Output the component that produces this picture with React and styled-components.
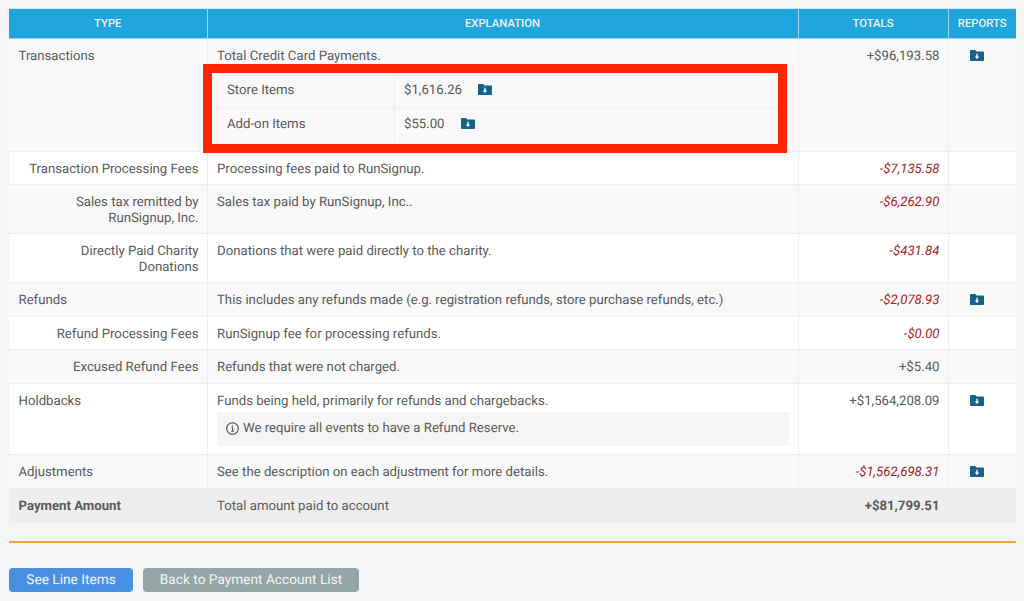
import React from "react";
import styled, { createGlobalStyle } from "styled-components";

const Global = createGlobalStyle`
  html, body { margin: 0; padding: 0; background: #f3f5f7; }
  body { font-family: Roboto, "Liberation Sans", sans-serif; font-size: 13.2px; color: #5a5a5a; text-rendering: geometricPrecision; }
`;

const Page = styled.div`
  position: relative;
  width: 1024px;
  height: 601px;
  overflow: hidden;
  box-sizing: border-box;
  padding: 8px 8px 0 9px;
`;

const Table = styled.table`
  width: 1007px;
  table-layout: fixed;
  border-collapse: collapse;
  line-height: 16px;
`;

const Head = styled.th`
  height: 30px;
  padding: 0;
  box-sizing: border-box;
  background: #20a5dd;
  color: #eaf6fc;
  font-size: 11.3px;
  font-weight: 500;
  text-transform: uppercase;
  text-align: center;
  border: 1px solid #9fd6ee;
  border-top: 1px solid #cfe7f3;
  &:first-child { border-left: none; }
  &:last-child { border-right: none; }
`;

const Row = styled.tr`
  background: ${(p) => (p.$total ? "#eeeeee" : p.$odd ? "#f9f9f9" : "#ffffff")};
  height: ${(p) => p.$h}px;
  font-weight: ${(p) => (p.$total ? 700 : 400)};
`;

const Cell = styled.td`
  box-sizing: border-box;
  padding: 10px ${(p) => (p.$report ? "18px" : "8px")} 0 ${(p) => (p.$report ? "8px" : "9.5px")};
  vertical-align: top;
  border: 1px solid #eeeeee;
  text-align: ${(p) => p.$align || "left"};
  color: ${(p) => (p.$neg ? "#a81d1d" : "#5a5a5a")};
  font-style: ${(p) => (p.$neg ? "italic" : "normal")};
  font-weight: ${(p) => (p.$plain ? 400 : "inherit")};
  &:first-child { border-left: none; }
  &:last-child { border-right: none; }
`;

const InnerTable = styled.table`
  width: 562px;
  margin: 9px 0 0 0;
  table-layout: fixed;
  border-collapse: collapse;
  border-left: 1px solid #eeeeee;
  line-height: 16px;
`;

const InnerRow = styled.tr`
  height: 34px;
`;

const InnerCell = styled.td`
  box-sizing: border-box;
  padding: 0 9px;
  border-bottom: ${(p) => (p.$last ? "none" : "1px solid #eeeeee")};
  border-right: ${(p) => (p.$first ? "1px solid #eeeeee" : "none")};
`;

const Amount = styled.span`
  margin-right: 16px;
`;

const Notice = styled.div`
  display: flex;
  align-items: center;
  gap: 4px;
  height: 34px;
  margin: 2px 0 0;
  padding-left: 9px;
  background: #f5f5f5;
`;

const Rule = styled.hr`
  width: 1007px;
  height: 2px;
  margin: 18px 0 25px;
  border: none;
  background: #f5a142;
`;

const Buttons = styled.div`
  display: flex;
  gap: 10px;
`;

const Button = styled.button`
  height: 24px;
  width: ${(p) => p.$w}px;
  padding: 0;
  border: none;
  border-radius: 4px;
  background: ${(p) => p.$bg};
  color: #f2f6f8;
  font-family: inherit;
  font-size: 13.7px;
  text-rendering: geometricPrecision;
`;

const Highlight = styled.div`
  position: absolute;
  left: 203px;
  top: 64px;
  width: 584px;
  height: 89px;
  box-sizing: border-box;
  border: 9px solid #ff2600;
  pointer-events: none;
`;

const FolderSvg = styled.svg`
  display: inline-block;
  vertical-align: -1px;
`;

const InfoSvg = styled.svg`
  margin-bottom: 2px;
`;

const Folder = () => (
  <FolderSvg width="14" height="11" viewBox="0 0 14 11">
    <path d="M0 1a1 1 0 0 1 1-1h4.2l1.3 1.5H13a1 1 0 0 1 1 1V10a1 1 0 0 1-1 1H1a1 1 0 0 1-1-1z" fill="#14638a" />
    <path d="M6.3 3.8h1.4v2.6h1.6L7 8.9 4.7 6.4h1.6z" fill="#ffffff" />
  </FolderSvg>
);

const InfoIcon = () => (
  <InfoSvg width="13" height="13" viewBox="0 0 13 13" fill="none" stroke="#4a4a4a" strokeWidth="1.1">
    <circle cx="6.5" cy="6.5" r="5.8" />
    <path d="M5.5 5.8h1.1v3.4M5.2 9.3h2.8" />
    <path d="M6.5 3.3v1.2" strokeWidth="1.3" />
  </InfoSvg>
);

const rows = [
  { h: 33, type: "Transaction Processing Fees", right: true, ex: "Processing fees paid to RunSignup.", total: "-$7,135.58", neg: true },
  { h: 49, type: "Sales tax remitted by RunSignup, Inc.", right: true, ex: "Sales tax paid by RunSignup, Inc..", total: "-$6,262.90", neg: true, odd: true },
  { h: 49, type: "Directly Paid Charity Donations", right: true, ex: "Donations that were paid directly to the charity.", total: "-$431.84", neg: true },
  { h: 34, type: "Refunds", ex: "This includes any refunds made (e.g. registration refunds, store purchase refunds, etc.)", total: "-$2,078.93", neg: true, report: true, odd: true },
  { h: 33, type: "Refund Processing Fees", right: true, ex: "RunSignup fee for processing refunds.", total: "-$0.00", neg: true },
  { h: 34, type: "Excused Refund Fees", right: true, ex: "Refunds that were not charged.", total: "+$5.40", odd: true },
];

export default function App() {
  return (
    <Page>
      <Global />
      <Table>
        <colgroup>
          <col style={{ width: 198 }} />
          <col style={{ width: 591 }} />
          <col style={{ width: 150 }} />
          <col style={{ width: 68 }} />
        </colgroup>
        <thead>
          <tr>
            <Head>Type</Head>
            <Head>Explanation</Head>
            <Head>Totals</Head>
            <Head>Reports</Head>
          </tr>
        </thead>
        <tbody>
          <Row $h={113} $odd>
            <Cell>Transactions</Cell>
            <Cell>
              Total Credit Card Payments.
              <InnerTable>
                <colgroup>
                  <col style={{ width: 177 }} />
                  <col />
                </colgroup>
                <tbody>
                  <InnerRow>
                    <InnerCell $first>Store Items</InnerCell>
                    <InnerCell><Amount>$1,616.26</Amount><Folder /></InnerCell>
                  </InnerRow>
                  <InnerRow>
                    <InnerCell $first $last>Add-on Items</InnerCell>
                    <InnerCell $last><Amount>$55.00</Amount><Folder /></InnerCell>
                  </InnerRow>
                </tbody>
              </InnerTable>
            </Cell>
            <Cell $align="right">+$96,193.58</Cell>
            <Cell $align="center" $report><Folder /></Cell>
          </Row>
          {rows.map((r) => (
            <Row key={r.type} $h={r.h} $odd={r.odd}>
              <Cell $align={r.right ? "right" : "left"}>{r.type}</Cell>
              <Cell>{r.ex}</Cell>
              <Cell $align="right" $neg={r.neg}>{r.total}</Cell>
              <Cell $align="center" $report>{r.report && <Folder />}</Cell>
            </Row>
          ))}
          <Row $h={71}>
            <Cell>Holdbacks</Cell>
            <Cell>
              Funds being held, primarily for refunds and chargebacks.
              <Notice><InfoIcon />We require all events to have a Refund Reserve.</Notice>
            </Cell>
            <Cell $align="right">+$1,564,208.09</Cell>
            <Cell $align="center" $report><Folder /></Cell>
          </Row>
          <Row $h={34} $odd>
            <Cell>Adjustments</Cell>
            <Cell>See the description on each adjustment for more details.</Cell>
            <Cell $align="right" $neg>-$1,562,698.31</Cell>
            <Cell $align="center" $report><Folder /></Cell>
          </Row>
          <Row $h={34} $total>
            <Cell>Payment Amount</Cell>
            <Cell $plain>Total amount paid to account</Cell>
            <Cell $align="right">+$81,799.51</Cell>
            <Cell $report />
          </Row>
        </tbody>
      </Table>
      <Rule />
      <Buttons>
        <Button $w={124} $bg="#4a90e2">See Line Items</Button>
        <Button $w={216} $bg="#95a5a6">Back to Payment Account List</Button>
      </Buttons>
      <Highlight />
    </Page>
  );
}
